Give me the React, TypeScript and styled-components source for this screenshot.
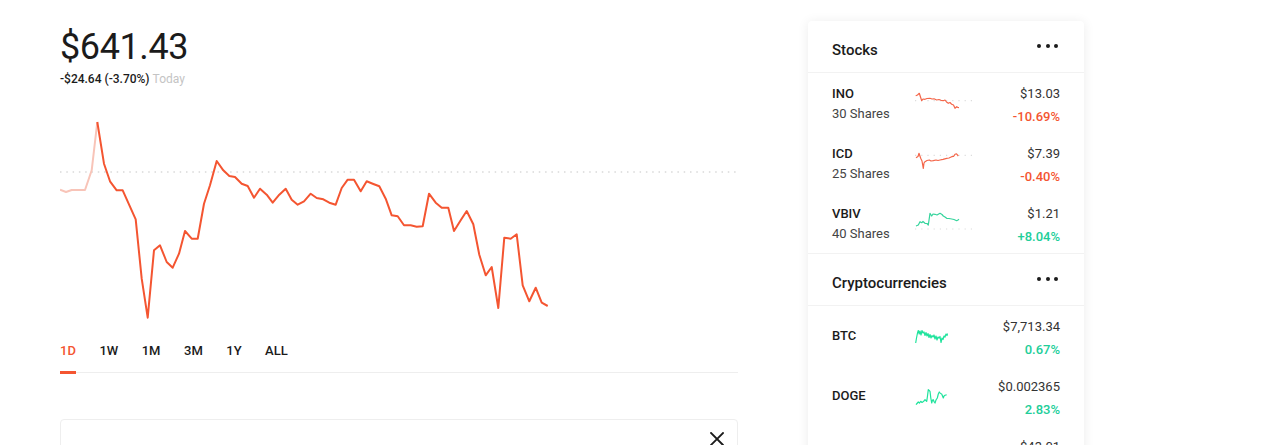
import React from "react";
import styled, { createGlobalStyle } from "styled-components";

const GlobalStyle = createGlobalStyle`
  html, body { margin: 0; padding: 0; overflow: hidden; background: #fff; }
  body { font-family: Roboto, "Liberation Sans", sans-serif; color: #1b1b1b; }
  * { box-sizing: border-box; }
`;

const RED = "#f45531";
const GREEN = "#21ce99";

const Page = styled.div`
  display: flex;
  align-items: flex-start;
  padding-left: 60px;
  gap: 70px;
`;

const Main = styled.div`
  width: 678px;
  padding-top: 26px;
  display: flex;
  flex-direction: column;
`;

const Price = styled.div`
  font-size: 36px;
  line-height: 43px;
  font-weight: 400;
  letter-spacing: -0.4px;
`;

const Change = styled.div`
  margin-top: 2px;
  font-size: 12px;
  line-height: 16px;
  font-weight: 500;
  span { color: #c4c4c4; font-weight: 400; }
`;

const Chart = styled.svg`
  display: block;
  margin-top: 15px;
`;

const Tabs = styled.div`
  display: flex;
  gap: 23.5px;
  border-bottom: 1px solid #eeeeee;
`;

const Tab = styled.div<{ $active?: boolean }>`
  position: relative;
  padding: 4px 0 13px;
  font-size: 13px;
  line-height: 16px;
  font-weight: 500;
  color: ${(p) => (p.$active ? RED : "#1b1b1b")};
  &::after {
    content: "";
    display: ${(p) => (p.$active ? "block" : "none")};
    position: absolute;
    left: 0;
    right: 0;
    bottom: -2px;
    height: 3px;
    background: ${RED};
  }
`;

const NewsCard = styled.div`
  margin-top: 46px;
  height: 120px;
  border: 1px solid #eeeeee;
  border-radius: 4px;
  display: flex;
  justify-content: flex-end;
  padding: 12px 13px 0 0;
`;

const Side = styled.div`
  width: 276px;
  margin-top: 21px;
  background: #fff;
  border-radius: 4px;
  box-shadow: 0 1px 12px rgba(0, 0, 0, 0.08);
`;

const Section = styled.div`
  & + & { border-top: 1px solid #f2f2f2; }
`;

const Header = styled.div`
  height: 52px;
  padding: 19px 26px 0 24px;
  display: flex;
  justify-content: space-between;
  border-bottom: 1px solid #f2f2f2;
`;

const Title = styled.div`
  font-size: 15px;
  line-height: 20px;
  font-weight: 500;
`;

const Dots = styled.div`
  display: flex;
  gap: 4.5px;
  padding-top: 4px;
  span {
    width: 4px;
    height: 4px;
    border-radius: 50%;
    background: #1b1b1b;
  }
`;

const Row = styled.div<{ $crypto?: boolean }>`
  height: 60px;
  padding: ${(p) => (p.$crypto ? "4px 24px 0" : "11px 24px 0")};
  display: flex;
  align-items: ${(p) => (p.$crypto ? "center" : "flex-start")};
`;

const NameCol = styled.div`
  width: 83px;
  font-size: 13px;
  line-height: 20px;
`;

const Symbol = styled.div<{ $crypto?: boolean }>`
  font-weight: 500;
  margin-bottom: ${(p) => (p.$crypto ? "4px" : "0")};
`;

const Shares = styled.div`
  color: #444;
`;

const Spark = styled.svg<{ $crypto?: boolean }>`
  display: block;
  margin-top: ${(p) => (p.$crypto ? "0" : "5px")};
  flex: none;
`;

const ValueCol = styled.div`
  flex: 1;
  text-align: right;
  font-size: 13px;
  line-height: 20px;
  color: #333;
`;

const Pct = styled.div<{ $up: boolean }>`
  margin-top: 3px;
  color: ${(p) => (p.$up ? GREEN : RED)};
  font-weight: 500;
`;

type Pt = [number, number];

const toPath = (pts: Pt[]) =>
  pts.map((p, i) => `${i === 0 ? "M" : "L"}${p[0]},${p[1]}`).join(" ");

const lightPts: Pt[] = [
  [60, 187.7], [66, 190], [71.7, 188], [85, 188], [91.7, 168.3], [97.3, 120],
];

const darkPts: Pt[] = [
  [97.3, 120], [104, 161.7], [110, 179.3], [116.7, 188.3], [122.7, 188.3], [135.7, 217.3],
  [141.7, 276.7], [147.7, 315.7], [154, 248.3], [160, 243.3], [166.7, 260], [172.7, 265.7],
  [179, 251.7], [185, 229], [191.7, 236.7], [197.7, 236.7], [204, 201.7], [210, 183.3],
  [216.7, 159], [223.3, 168.3], [229.3, 174], [235, 175], [241.7, 181.7], [247.7, 184],
  [254, 195.7], [260, 186.7], [266.7, 192.7], [272.7, 200.7], [279.3, 192.7], [285.7, 186.7],
  [291.7, 197.7], [297.7, 202.7], [304, 199.3], [310.7, 191.7], [316.7, 196], [323.3, 197.3],
  [329.3, 200.7], [335.7, 202.7], [341.7, 186], [347.7, 177.7], [354, 177.7], [360.7, 189.3],
  [366.7, 179.3], [372.7, 181.7], [379.3, 184.3], [385.7, 196.7], [391.7, 213.3], [397.7, 214.3],
  [404, 223.3], [410.7, 223.3], [416.7, 224.7], [422.7, 224.3], [429, 191.7], [435.7, 200.7],
  [441.7, 205.7], [448.3, 205.7], [454, 229], [460.7, 218.3], [466.7, 209], [473.3, 222.3],
  [479.3, 252.7], [485.7, 273.3], [491.7, 265], [498.3, 306], [504.3, 235.7], [510.7, 236.7],
  [516.7, 232.3], [522.7, 283.3], [529.3, 299.3], [535.7, 285.7], [541.7, 300.7], [547.7, 304],
];

type Stock = {
  sym: string;
  shares?: string;
  price: string;
  pct: string;
  up: boolean;
  pts: Pt[];
  base?: number;
  color: string;
};

const stocks: Stock[] = [
  {
    sym: "INO", shares: "30 Shares", price: "$13.03", pct: "-10.69%", up: false, color: "#f4664a", base: 11.7,
    pts: [[0.7, 6.7], [2.5, 6], [4.3, 4.3], [5.5, 8], [6.7, 11.7], [8, 10], [10, 10.3], [12, 9.5], [15, 9.3], [17, 10], [19, 9.8], [21.7, 11], [24, 10.5], [26, 11.3], [28.3, 11.7], [30, 11], [31.5, 13], [33.3, 14.3], [35, 13.5], [36.7, 15.3], [38.5, 16], [40, 19.3], [41.7, 17.7], [43, 18.5], [44, 18.7]],
  },
  {
    sym: "ICD", shares: "25 Shares", price: "$7.39", pct: "-0.40%", up: false, color: "#f4664a", base: 6.3,
    pts: [[1, 8.7], [3, 7.5], [4, 4.3], [5.7, 9.3], [7, 12], [8.3, 19.3], [9, 14], [10, 12.7], [12, 11.5], [14.3, 11], [16, 12], [18.3, 11.7], [21, 11], [23, 11.5], [25, 11], [28, 10.3], [31.7, 9.3], [34, 9], [36.7, 7.7], [38.5, 7.5], [40, 5.3], [41.5, 4.8], [43.3, 7]],
  },
  {
    sym: "VBIV", shares: "40 Shares", price: "$1.21", pct: "+8.04%", up: true, color: "#35d49c", base: 20,
    pts: [[1, 17], [3.3, 16], [5, 12.7], [6.7, 13.7], [8, 12.5], [10, 14.3], [12, 14.5], [13.3, 16], [15, 4.3], [16.7, 7], [18, 5], [20, 5.3], [22, 6], [25, 4.3], [27, 5.5], [28.3, 7], [30, 8], [31.7, 9.3], [34, 9.5], [36.7, 10], [39, 10.5], [41.7, 11.7], [43, 11], [44, 10.3]],
  },
];

const cryptos: Stock[] = [
  {
    sym: "BTC", price: "$7,713.34", pct: "0.67%", up: true, color: "#1fe39c",
    pts: [[0.7, 19], [1.5, 14], [2.5, 9], [3.3, 6.5], [4.2, 10], [5, 7], [6, 11], [7, 6.5], [8, 9], [9, 8], [10, 11.5], [11, 8.5], [12, 12], [13, 9.5], [14, 13.5], [15, 10.5], [16, 14], [17, 11.5], [18, 13], [19, 11], [20, 15], [21, 12], [22, 16], [23, 13], [24, 14], [25, 12.5], [26, 18.5], [27, 14], [28, 15.5], [29, 12], [30, 13], [31, 10], [32, 11.5], [32.5, 9.5]],
  },
  {
    sym: "DOGE", price: "$0.002365", pct: "2.83%", up: true, color: "#1fe39c",
    pts: [[1, 20.7], [2, 19.5], [3.3, 18], [4.5, 19], [5.7, 17.3], [7, 18.5], [7.7, 18], [9, 17], [10, 15.7], [11.7, 17.3], [12.5, 12], [13.3, 5.7], [14.2, 6.5], [15, 7.3], [15.8, 14], [16.7, 19], [17.5, 16], [18.3, 15.7], [19.2, 18], [20, 19], [21, 16], [22.3, 14], [23.3, 10], [24.3, 8], [25.5, 9.5], [26.7, 10], [27.5, 12], [28.3, 14], [29, 12], [30, 11.3], [31.7, 10.7]],
  },
  {
    sym: "ETH", price: "$43.01", pct: "1.12%", up: true, color: "#1fe39c",
    pts: [[1, 16], [5, 12], [9, 14], [13, 9], [17, 11], [21, 8], [25, 10], [29, 7], [32, 9]],
  },
];

const Sparkline: React.FC<{ s: Stock; crypto?: boolean }> = ({ s, crypto }) => (
  <Spark $crypto={crypto} width={crypto ? 34 : 58} height={28} viewBox={crypto ? "0 0 34 28" : "0 0 58 28"}>
    {s.base !== undefined && (
      <line x1={0} y1={s.base} x2={58} y2={s.base} stroke="#dcdcdc" strokeWidth={1.2} strokeDasharray="1.2 5" />
    )}
    <path d={toPath(s.pts)} fill="none" stroke={s.color} strokeWidth={1.2} strokeLinejoin="round" />
  </Spark>
);

const CloseIcon = () => (
  <svg width="14" height="14" viewBox="0 0 14 14">
    <path d="M1 1 L13 13 M13 1 L1 13" stroke="#1b1b1b" strokeWidth="1.8" strokeLinecap="square" />
  </svg>
);

export default function App() {
  return (
    <>
      <GlobalStyle />
      <Page>
        <Main>
          <Price>$641.43</Price>
          <Change>
            -$24.64 (-3.70%) <span>Today</span>
          </Change>
          <Chart width={678} height={237} viewBox="60 100 678 237">
            <line x1={60} y1={170} x2={738} y2={170} stroke="#d9d9d9" strokeWidth={1.5} strokeDasharray="1.5 4.8" />
            <path d={toPath(lightPts)} fill="none" stroke="#f8c4b8" strokeWidth={2} strokeLinejoin="round" />
            <path d={toPath(darkPts)} fill="none" stroke={RED} strokeWidth={2} strokeLinejoin="round" />
          </Chart>
          <Tabs>
            <Tab $active>1D</Tab>
            <Tab>1W</Tab>
            <Tab>1M</Tab>
            <Tab>3M</Tab>
            <Tab>1Y</Tab>
            <Tab>ALL</Tab>
          </Tabs>
          <NewsCard>
            <CloseIcon />
          </NewsCard>
        </Main>
        <Side>
          <Section>
            <Header>
              <Title>Stocks</Title>
              <Dots><span /><span /><span /></Dots>
            </Header>
            {stocks.map((s) => (
              <Row key={s.sym}>
                <NameCol>
                  <Symbol>{s.sym}</Symbol>
                  <Shares>{s.shares}</Shares>
                </NameCol>
                <Sparkline s={s} />
                <ValueCol>
                  <div>{s.price}</div>
                  <Pct $up={s.up}>{s.pct}</Pct>
                </ValueCol>
              </Row>
            ))}
          </Section>
          <Section>
            <Header>
              <Title>Cryptocurrencies</Title>
              <Dots><span /><span /><span /></Dots>
            </Header>
            {cryptos.map((s) => (
              <Row key={s.sym} $crypto>
                <NameCol>
                  <Symbol $crypto>{s.sym}</Symbol>
                </NameCol>
                <Sparkline s={s} crypto />
                <ValueCol>
                  <div>{s.price}</div>
                  <Pct $up={s.up}>{s.pct}</Pct>
                </ValueCol>
              </Row>
            ))}
          </Section>
        </Side>
      </Page>
    </>
  );
}
